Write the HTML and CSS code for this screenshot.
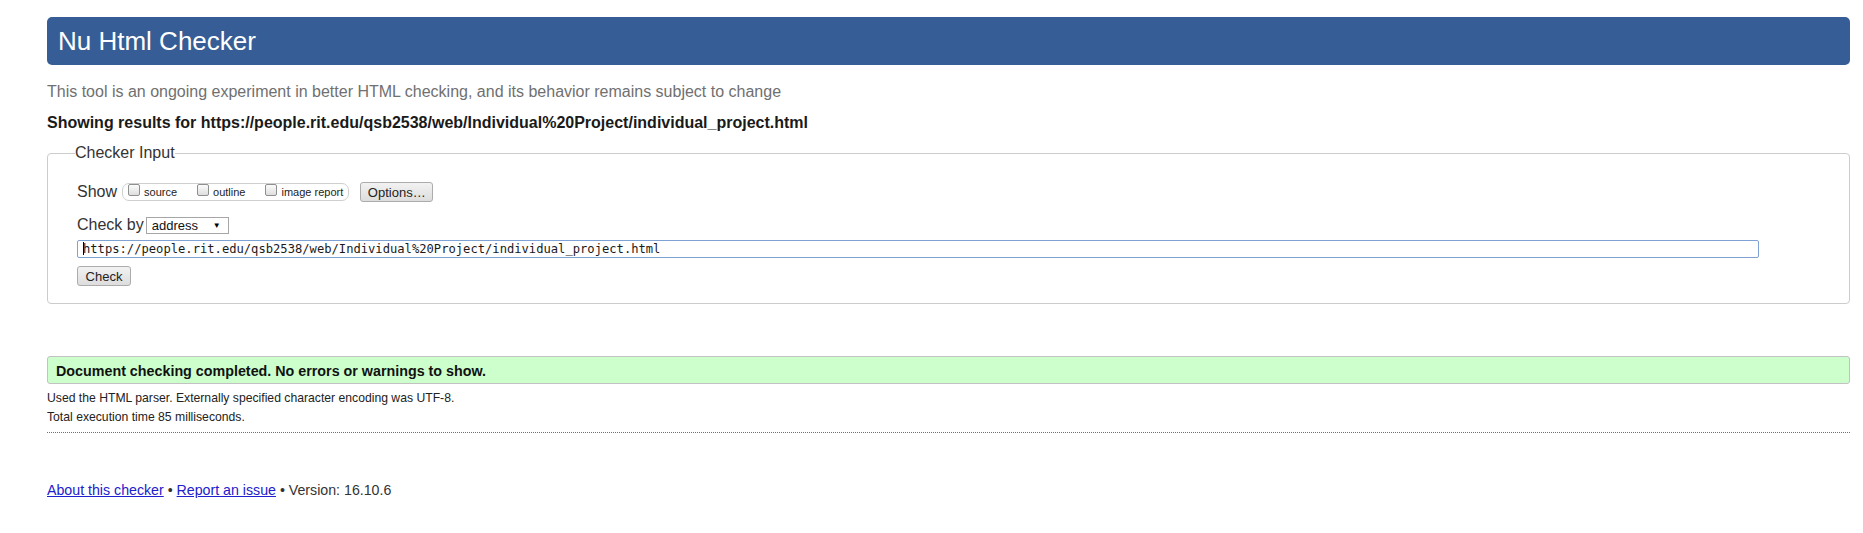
FILE: index.html
```html
<!DOCTYPE html>
<html lang="en">
<head>
<meta charset="utf-8">
<title>Nu Html Checker</title>
<link rel="stylesheet" href="styles.css">
</head>
<body>
<h1 class="banner">Nu Html Checker</h1>
<p class="tagline">This tool is an ongoing experiment in better HTML checking, and its behavior remains subject to change</p>
<p class="showing">Showing results for https://people.rit.edu/qsb2538/web/Individual%20Project/individual_project.html</p>
<fieldset class="input-box">
  <legend class="legend">Checker Input</legend>
  <div class="row row-show">
    <span class="label">Show</span>
    <span class="pill">
      <span class="opt"><span class="cb"></span>source</span>
      <span class="opt"><span class="cb"></span>outline</span>
      <span class="opt"><span class="cb"></span>image report</span>
    </span>
    <span class="btn btn-options">Options…</span>
  </div>
  <div class="row row-by">
    <span class="label label-by">Check by</span>
    <span class="select"><span>address</span><span class="arrow">▼</span></span>
  </div>
  <div class="url"><span class="caret"></span>https://people.rit.edu/qsb2538/web/Individual%20Project/individual_project.html</div>
  <span class="btn btn-check">Check</span>
</fieldset>
<div class="success">Document checking completed. No errors or warnings to show.</div>
<p class="details">Used the HTML parser. Externally specified character encoding was UTF-8.<br>Total execution time 85 milliseconds.</p>
<div class="rule"></div>
<p class="footer"><a href="#">About this checker</a> • <a href="#">Report an issue</a> • Version: 16.10.6</p>
</body>
</html>
```
FILE: styles.css
```css
html, body {
  background: #ffffff;
}
body {
  margin: 0;
  padding: 17px 13px 0 47px;
  font-family: "Liberation Sans", Arial, sans-serif;
  color: #222;
}
.banner {
  margin: 0;
  height: 48px;
  line-height: 48px;
  padding: 0 0 0 11px;
  background: #365d95;
  color: #fff;
  font-size: 26px;
  font-weight: normal;
  border-radius: 5px;
}
.tagline {
  margin: 18px 0 0;
  font-size: 16px;
  line-height: 18px;
  color: #707070;
}
.showing {
  margin: 13px 0 0;
  font-size: 16px;
  line-height: 18px;
  font-weight: bold;
  color: #1a1a1a;
}
.input-box {
  margin: 12px 0 0;
  padding: 20px 29px 17px 29px;
  border: 1px solid #cccccc;
  border-radius: 4px;
  min-width: 0;
}
.legend {
  padding: 0;
  margin-left: -2px;
  font-size: 16px;
  line-height: 18px;
  color: #333;
}
.row {
  display: flex;
  align-items: center;
}
.row-show {
  height: 20px;
}
.label {
  font-size: 16px;
  line-height: 18px;
  color: #333;
  margin-right: 5px;
}
.pill {
  display: flex;
  align-items: flex-start;
  box-sizing: border-box;
  height: 18px;
  border: 1px solid #cfcfcf;
  border-radius: 7px;
  padding: 0 5px;
}
.opt {
  display: flex;
  align-items: flex-start;
  font-size: 11px;
  line-height: 16px;
  color: #222;
  margin-right: 20px;
}
.opt:last-child {
  margin-right: 0;
}
.cb {
  box-sizing: border-box;
  width: 12px;
  height: 12px;
  margin-right: 4px;
  border: 1px solid #8e8f8f;
  border-radius: 2px;
  background: linear-gradient(#fbfbfb, #dedede);
}
.btn {
  display: flex;
  align-items: center;
  justify-content: center;
  box-sizing: border-box;
  height: 20px;
  font-size: 13px;
  color: #222;
  border: 1px solid #acacac;
  border-radius: 3px;
  background: linear-gradient(#f2f2f2, #dddddd);
}
.btn-options {
  width: 73px;
  margin-left: 11px;
}
.row-by {
  margin-top: 14px;
  height: 18px;
}
.label-by {
  margin-right: 2px;
}
.select {
  display: flex;
  align-items: center;
  justify-content: space-between;
  box-sizing: border-box;
  width: 83px;
  height: 17px;
  padding: 0 7px 0 5px;
  border: 1px solid #a6a6a6;
  font-size: 13px;
  color: #111;
  background: #fff;
}
.arrow {
  font-size: 8px;
  color: #000;
}
.url {
  box-sizing: border-box;
  margin-top: 6px;
  width: 1682px;
  height: 18px;
  padding-left: 5px;
  border: 1px solid #7fa2d4;
  border-radius: 2px;
  font-family: "DejaVu Sans Mono", "Liberation Mono", monospace;
  font-size: 12.15px;
  line-height: 16px;
  color: #1a1a1a;
  white-space: nowrap;
}
.caret {
  display: inline-block;
  width: 0;
  height: 13px;
  border-left: 1px solid #000;
  margin-right: -1px;
  vertical-align: -2px;
}
.btn-check {
  margin-top: 8px;
  width: 54px;
}
.success {
  box-sizing: border-box;
  margin-top: 52px;
  height: 28px;
  padding: 6px 8px 4px;
  line-height: 16px;
  font-size: 14.3px;
  font-weight: bold;
  color: #111;
  background: #ccffcc;
  border: 1px solid #c2c2c2;
  border-radius: 3px;
}
.details {
  margin: 5px 0 0;
  font-size: 12.2px;
  line-height: 19px;
  color: #222;
}
.rule {
  margin-top: 5px;
  border-top: 1px dotted #707070;
}
.footer {
  margin: 49px 0 0;
  font-size: 14.2px;
  line-height: 16px;
  color: #333;
}
.footer a {
  color: #2020cc;
  text-decoration: underline;
}
```
